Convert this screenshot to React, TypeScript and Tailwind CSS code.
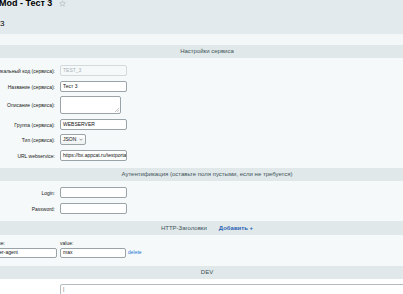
import React from 'react';

const Label: React.FC<{ text: string }> = ({ text }) => (
    <div className="w-[57px] shrink-0 flex justify-end pr-[2px]">
        <span className="whitespace-nowrap shrink-0 text-[5px] leading-[6px] text-[#1a1a1a]">{text}</span>
    </div>
);

const Input: React.FC<{ value?: string; w?: string; disabled?: boolean }> = ({ value = '', w = 'w-[67px]', disabled }) => (
    <div
        className={`${w} h-[11px] rounded-[2px] border flex items-center px-[2px] overflow-hidden whitespace-nowrap text-[5px] ${
            disabled ? 'border-[#d3dadc] bg-[#f5f9f9] text-[#aab3b7]' : 'border-[#9aa3a8] bg-white text-[#111]'
        }`}
    >
        {value}
    </div>
);

const Header: React.FC<{ children: React.ReactNode; h?: string }> = ({ children, h = 'h-[13px]' }) => (
    <div className={`w-[414px] ${h} bg-[#e0e8ea] flex items-center justify-center text-[6px] text-[#3f5358] whitespace-nowrap`}>
        {children}
    </div>
);

const Grip = () => (
    <svg width="4" height="4" viewBox="0 0 4 4" className="absolute right-[1px] bottom-[1px]">
        <path d="M4 0 L0 4 M4 2 L2 4" stroke="#9aa3a8" strokeWidth="0.6" />
    </svg>
);

export default function App() {
    return (
        <div className="w-[403px] h-[294px] overflow-hidden bg-[#e3eaed] font-['Liberation_Sans',Arial,sans-serif]">
            {/* Title */}
            <div className="h-[35px]">
                <div className="flex items-center mt-[-1px] ml-[-1px] h-[9px]">
                    <span className="text-[9px] leading-[9px] font-bold text-black whitespace-nowrap">Mod - Тест 3</span>
                    <svg width="7" height="7" viewBox="0 0 24 24" className="ml-[7px]">
                        <path
                            d="M12 2.5l2.9 6.3 6.9.7-5.2 4.6 1.5 6.8L12 17.4l-6.1 3.5 1.5-6.8-5.2-4.6 6.9-.7z"
                            fill="none"
                            stroke="#a3abb0"
                            strokeWidth="1.6"
                            strokeLinejoin="round"
                        />
                    </svg>
                </div>
                <div className="mt-[12px] text-[8px] leading-[8px] text-black">3</div>
            </div>
            <div className="h-[11px] bg-[#f3f7f7]" />

            <div className="bg-[#f5f9f9]">
                <Header>Настройки сервиса</Header>

                <div className="pt-[7px]">
                    <div className="flex items-center">
                        <Label text="Уникальный код (сервиса):" />
                        <div className="ml-[3px]"><Input value="TEST_3" disabled /></div>
                    </div>
                    <div className="flex items-center mt-[5px]">
                        <Label text="Название (сервиса):" />
                        <div className="ml-[3px]"><Input value="Тест 3" /></div>
                    </div>
                    <div className="flex items-center mt-[4px]">
                        <Label text="Описание (сервиса):" />
                        <div className="ml-[3px] relative w-[61px] h-[18px] rounded-[2px] border border-[#9aa3a8] bg-white">
                            <Grip />
                        </div>
                    </div>
                    <div className="flex items-center mt-[5px]">
                        <Label text="Группа (сервиса):" />
                        <div className="ml-[3px]"><Input value="WEBSERVER" /></div>
                    </div>
                    <div className="flex items-center mt-[4px]">
                        <Label text="Тип (сервиса):" />
                        <div className="ml-[3px] w-[26px] h-[11px] rounded-[2px] border border-[#9aa3a8] bg-gradient-to-b from-white to-[#eef1f2] flex items-center justify-between px-[2px] text-[5px] text-[#111]">
                            <span>JSON</span>
                            <svg width="4" height="3" viewBox="0 0 8 5">
                                <path d="M1 1l3 3 3-3" fill="none" stroke="#555" strokeWidth="1.2" />
                            </svg>
                        </div>
                    </div>
                    <div className="flex items-center mt-[5px]">
                        <Label text="URL webservice:" />
                        <div className="ml-[3px]"><Input value="https://bx.appcat.ru/testportal/" /></div>
                    </div>
                </div>

                <div className="mt-[7px]">
                    <Header>Аутентификация (оставьте поля пустыми, если не требуется)</Header>
                </div>

                <div className="pt-[6px]">
                    <div className="flex items-center">
                        <Label text="Login:" />
                        <div className="ml-[3px]"><Input /></div>
                    </div>
                    <div className="flex items-center mt-[5px]">
                        <Label text="Password:" />
                        <div className="ml-[3px]"><Input /></div>
                    </div>
                </div>

                <div className="mt-[7px]">
                    <Header h="h-[14px]">
                        <span>HTTP-Заголовки</span>
                        <span className="ml-[12px] text-[#2b62b3] font-bold">Добавить +</span>
                    </Header>
                </div>

                <div className="flex items-end pt-[5px] ml-[-9px]">
                    <div className="w-[66px]">
                        <div className="text-[5px] leading-[6px] text-[#1a1a1a] mb-[2px]">name:</div>
                        <div className="h-[10px] rounded-[2px] border border-[#9aa3a8] bg-white flex items-center px-[2px] text-[5px] text-[#111] whitespace-nowrap overflow-hidden">
                            user-agent
                        </div>
                    </div>
                    <div className="w-[66px] ml-[3px]">
                        <div className="text-[5px] leading-[6px] text-[#1a1a1a] mb-[2px]">value:</div>
                        <div className="h-[10px] rounded-[2px] border border-[#9aa3a8] bg-white flex items-center px-[2px] text-[5px] text-[#111] whitespace-nowrap overflow-hidden">
                            max
                        </div>
                    </div>
                    <a className="ml-[2px] h-[10px] flex items-center text-[5px] text-[#2675d7]">delete</a>
                </div>

                <div className="mt-[8px]">
                    <Header>DEV</Header>
                </div>

                <div className="bg-white pt-[5px] h-[40px]">
                    <div className="ml-[60px] w-[400px] h-[30px] rounded-[2px] border border-[#b4bcc0] bg-white px-[2px] pt-[1px] text-[5px] leading-[6px] text-[#555]">
                        |
                    </div>
                </div>
            </div>
        </div>
    );
}
